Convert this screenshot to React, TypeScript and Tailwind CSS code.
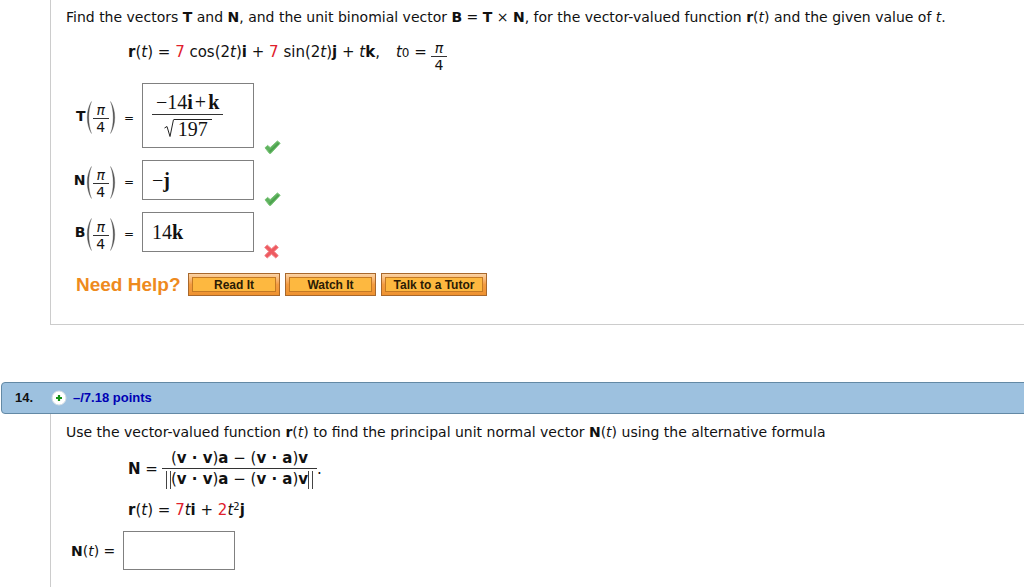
import React from 'react';

function Fraction({ top, bottom, className = '' }: { top: React.ReactNode; bottom: React.ReactNode; className?: string }) {
  return (
    <span className={`inline-flex flex-col items-center ${className}`}>
      <span className="self-stretch border-b border-[#333] px-1 text-center">{top}</span>
      <span>{bottom}</span>
    </span>
  );
}

function PiOverFour() {
  return <Fraction top={<i>π</i>} bottom="4" className="text-sm leading-4" />;
}

function Paren({ flip = false }: { flip?: boolean }) {
  return (
    <svg width="6" height="33" viewBox="0 0 6 33" className={flip ? '-scale-x-100' : ''} aria-hidden="true">
      <path d="M5.5 0.5C-0.2 9 -0.2 24 5.5 32.5C1.9 24 1.9 9 5.5 0.5Z" fill="#555" stroke="#555" strokeWidth="0.3" />
    </svg>
  );
}

// double bar of the vector norm
function NormBar() {
  return <span className="inline-block h-[18px] w-[5px] border-x border-[#444] align-middle" />;
}

function CheckIcon() {
  return (
    <svg width="17" height="15" viewBox="0 0 17 15" role="img" aria-label="Correct">
      <path d="M1 7.8L3.6 5.4L6.2 7.6L13.4 1L16.2 3.2L6.8 13.4H5.4Z" fill="#5fb35f" stroke="#7cc47a" strokeLinejoin="round" />
      <path d="M5.6 11.6L14.6 3.4" fill="none" stroke="#4ba04d" strokeWidth="1.6" />
    </svg>
  );
}

function CrossIcon() {
  return (
    <svg width="15" height="15" viewBox="0 0 15 15" role="img" aria-label="Incorrect">
      <path d="M3.2 1L7.5 4.8L11.8 1L14.3 3.4L10.2 7.5L14.3 11.6L11.8 14L7.5 10.2L3.2 14L0.7 11.6L4.8 7.5L0.7 3.4Z" fill="#ee5a60" stroke="#f2878b" strokeLinejoin="round" />
    </svg>
  );
}

interface AnswerRowProps {
  name: string;
  correct: boolean;
  tall?: boolean;
  children: React.ReactNode;
}

function AnswerRow({ name, correct, tall = false, children }: AnswerRowProps) {
  const id = `answer-${name}`;
  return (
    <div className="flex items-center">
      <div id={id} className="flex w-[76px] items-center pr-2 pt-1">
        <span className="flex flex-1 items-center justify-end">
          <b className="pb-1 text-sm">{name}</b>
          <Paren />
          <span className="px-px"><PiOverFour /></span>
          <Paren flip />
        </span>
        <span className="pl-2 text-xs">=</span>
      </div>
      <div
        role="textbox"
        aria-labelledby={id}
        tabIndex={0}
        className={`flex w-28 items-center border border-[#808080] px-[9px] font-['Liberation_Serif',serif] text-xl leading-6 ${tall ? 'h-[65px] pb-1' : 'h-10'}`}
      >
        {children}
      </div>
      <span className="-mb-[7px] self-end pl-[10px]">{correct ? <CheckIcon /> : <CrossIcon />}</span>
    </div>
  );
}

function HelpButton({ label, width }: { label: string; width: string }) {
  return (
    <button
      type="button"
      className={`h-[23px] border border-[#a8682c] bg-[#f09a3a] bg-linear-to-b from-[#fbd3a4] via-[#f39c40] to-[#ee9230] p-[3px] ${width}`}
    >
      <span className="flex h-full items-center justify-center whitespace-nowrap border border-[#c47a24] bg-[#fdb840] font-['Liberation_Sans',sans-serif] text-xs font-bold text-[#2b1b05]">
        {label}
      </span>
    </button>
  );
}

function Red({ children }: { children: React.ReactNode }) {
  return <span className="text-[#e0202c]">{children}</span>;
}

export default function App() {
  return (
    <main className="overflow-x-hidden bg-white font-['DejaVu_Sans',sans-serif] text-[15px] leading-5 text-[#111]">
      <section className="ml-[50px] border-b border-l border-[#ccc] pb-7 pl-[15px] pt-[7px]">
        <p className="whitespace-nowrap text-sm leading-5">
          Find the vectors <b>T</b> and <b>N</b>, and the unit binomial vector <b>B</b> = <b>T</b> × <b>N</b>, for the
          vector-valued function <b>r</b>(<i>t</i>) and the given value of <i>t</i>.
        </p>

        <div className="flex items-center pl-[62px] pt-[7px]">
          <span>
            <b>r</b>(<i>t</i>) = <Red>7</Red> cos(2<i>t</i>)<b>i</b> + <Red>7</Red> sin(2<i>t</i>)<b>j</b> + <i>t</i>
            <b>k</b>,
          </span>
          <span className="pl-4 pr-1">
            <i>t</i>
            <span className="text-xs">0</span> =
          </span>
          <span className="-mb-1 pt-1"><PiOverFour /></span>
        </div>

        <div className="flex flex-col gap-3 pt-[14px]">
          <AnswerRow name="T" correct tall>
            <Fraction
              top={<>−14<b>i</b><span className="px-[2px]">+</span><b>k</b></>}
              bottom={
                <span className="flex items-end pt-1">
                  <svg width="10" height="19" viewBox="0 0 10 19" aria-hidden="true">
                    <path d="M0.5 9L3 7.5L6 17.5L9.5 0.5" fill="none" stroke="#222" />
                  </svg>
                  <span className="border-t border-[#222] px-1 leading-[18px]">197</span>
                </span>
              }
            />
          </AnswerRow>
          <AnswerRow name="N" correct>
            −<b>j</b>
          </AnswerRow>
          <AnswerRow name="B" correct={false}>
            14<b>k</b>
          </AnswerRow>
        </div>

        <div className="flex items-center gap-[5px] pl-[10px] pt-[21px]">
          <h2 className="w-[107px] whitespace-nowrap font-['Liberation_Sans',sans-serif] text-[19px] font-bold leading-[23px] text-[#ee8a1d]">
            Need Help?
          </h2>
          <HelpButton label="Read It" width="w-[92px]" />
          <HelpButton label="Watch It" width="w-[91px]" />
          <HelpButton label="Talk to a Tutor" width="w-[106px]" />
        </div>
      </section>

      <header className="-mr-1 ml-px mt-[57px] flex h-8 items-center rounded border border-[#6389a5] bg-[#9dc1df] font-['Liberation_Sans',sans-serif] text-[13px] font-bold">
        <span className="w-[49px] pl-[13px]">14.</span>
        <button type="button" aria-label="Show details" className="rounded-full">
          <svg width="16" height="16" viewBox="0 0 16 16" aria-hidden="true">
            <circle cx="8" cy="8" r="7" fill="#fff" stroke="#d3dde4" />
            <path d="M8 5V11M5 8H11" stroke="#159015" strokeWidth="2.2" />
          </svg>
        </button>
        <a href="#points" className="pl-[6px] text-[#0000b4]">–/7.18 points</a>
      </header>

      <section className="ml-[50px] border-l border-[#ccc] pb-[17px] pl-[15px] pt-2">
        <p className="whitespace-nowrap text-sm leading-5">
          Use the vector-valued function <b>r</b>(<i>t</i>) to find the principal unit normal vector <b>N</b>(<i>t</i>)
          using the alternative formula
        </p>

        <div className="flex items-center pl-[62px] pt-[6px]">
          <span className="pr-1">
            <b>N</b> =
          </span>
          <Fraction
            top={<>(<b>v · v</b>)<b>a</b> − (<b>v · a</b>)<b>v</b></>}
            bottom={
              <span className="whitespace-nowrap px-1">
                <NormBar />(<b>v · v</b>)<b>a</b> − (<b>v · a</b>)<b>v</b><NormBar />
              </span>
            }
          />
          <span>.</span>
        </div>

        <p className="pl-[62px] pt-[11px]">
          <b>r</b>(<i>t</i>) = <Red>7</Red>
          <i>t</i>
          <b>i</b> + <Red>2</Red>
          <i>t</i>
          <sup className="text-[10px]">2</sup>
          <b>j</b>
        </p>

        <div className="flex items-center pl-[5px] pt-[11px]">
          <label htmlFor="answer-nt" className="w-[52px] text-sm">
            <b>N</b>(<i>t</i>) =
          </label>
          <input id="answer-nt" type="text" className="h-[39px] w-28 border border-[#808080] px-2" />
        </div>
      </section>
    </main>
  );
}
